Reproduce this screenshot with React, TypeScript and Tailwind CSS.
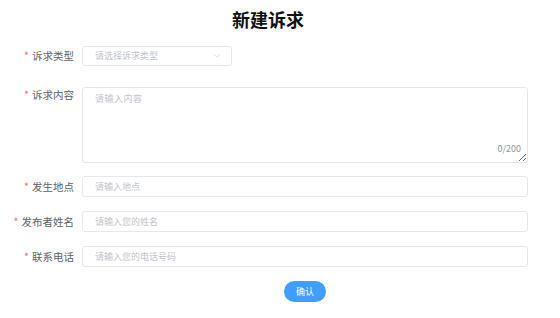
import { ChevronDown } from "lucide-react";

const labelClass =
  "w-[82px] shrink-0 pr-[8px] text-right text-[10.5px] text-[#606266]";
const inputClass =
  "block h-[21px] w-full rounded-[3px] border border-[#e4e7ed] bg-white px-[12px] text-[9px] text-[#606266] outline-0 placeholder:text-[#c0c4cc]";

function Star() {
  return <span className="mr-[3px] text-[#f56c6c]">*</span>;
}

export default function App() {
  return (
    <div className="min-h-screen w-[560px] bg-white font-['Noto_Sans_CJK_SC','Noto_Sans',sans-serif]">
      <div className="w-[536px] pt-[8px]">
        <h1 className="text-center text-[18px] font-bold leading-[22px] text-[#111]">
          新建诉求
        </h1>

        <form
          onSubmit={(e) => e.preventDefault()}
          className="mt-[16px] flex flex-col pr-[8px]"
        >
          <div className="flex items-start">
            <label className={labelClass + " leading-[20px]"}>
              <Star />
              诉求类型
            </label>
            <div className="flex h-[20px] w-[150px] items-center justify-between rounded-[3px] border border-[#e4e7ed] pl-[12px] pr-[9px]">
              <span className="text-[9px] text-[#c0c4cc]">请选择诉求类型</span>
              <ChevronDown size={10} strokeWidth={1.5} className="text-[#c0c4cc]" />
            </div>
          </div>

          <div className="mt-[21px] flex items-start">
            <label className={labelClass + " leading-[15px]"}>
              <Star />
              诉求内容
            </label>
            <div className="relative flex-1">
              <textarea
                placeholder="请输入内容"
                className="block h-[76px] w-full rounded-[3px] border border-[#e4e7ed] px-[12px] pt-[3px] text-[9px] leading-[16px] tracking-[0.5px] text-[#606266] outline-0 placeholder:text-[#c0c4cc]"
              />
              <span className="absolute bottom-[9px] right-[7px] text-[9px] leading-[10px] text-[#909399]">
                0/200
              </span>
            </div>
          </div>

          <div className="mt-[13px] flex items-start">
            <label className={labelClass + " leading-[21px]"}>
              <Star />
              发生地点
            </label>
            <input placeholder="请输入地点" className={inputClass} />
          </div>

          <div className="mt-[14px] flex items-start">
            <label className={labelClass + " leading-[21px]"}>
              <Star />
              发布者姓名
            </label>
            <input placeholder="请输入您的姓名" className={inputClass} />
          </div>

          <div className="mt-[14px] flex items-start">
            <label className={labelClass + " leading-[21px]"}>
              <Star />
              联系电话
            </label>
            <input placeholder="请输入您的电话号码" className={inputClass} />
          </div>

          <div className="mt-[14px] flex pl-[82px]">
            <div className="flex flex-1 justify-center">
              <button
                type="submit"
                className="h-[21px] w-[42px] rounded-full bg-[#409eff] text-[9px] text-white"
              >
                确认
              </button>
            </div>
          </div>
        </form>
      </div>
    </div>
  );
}
